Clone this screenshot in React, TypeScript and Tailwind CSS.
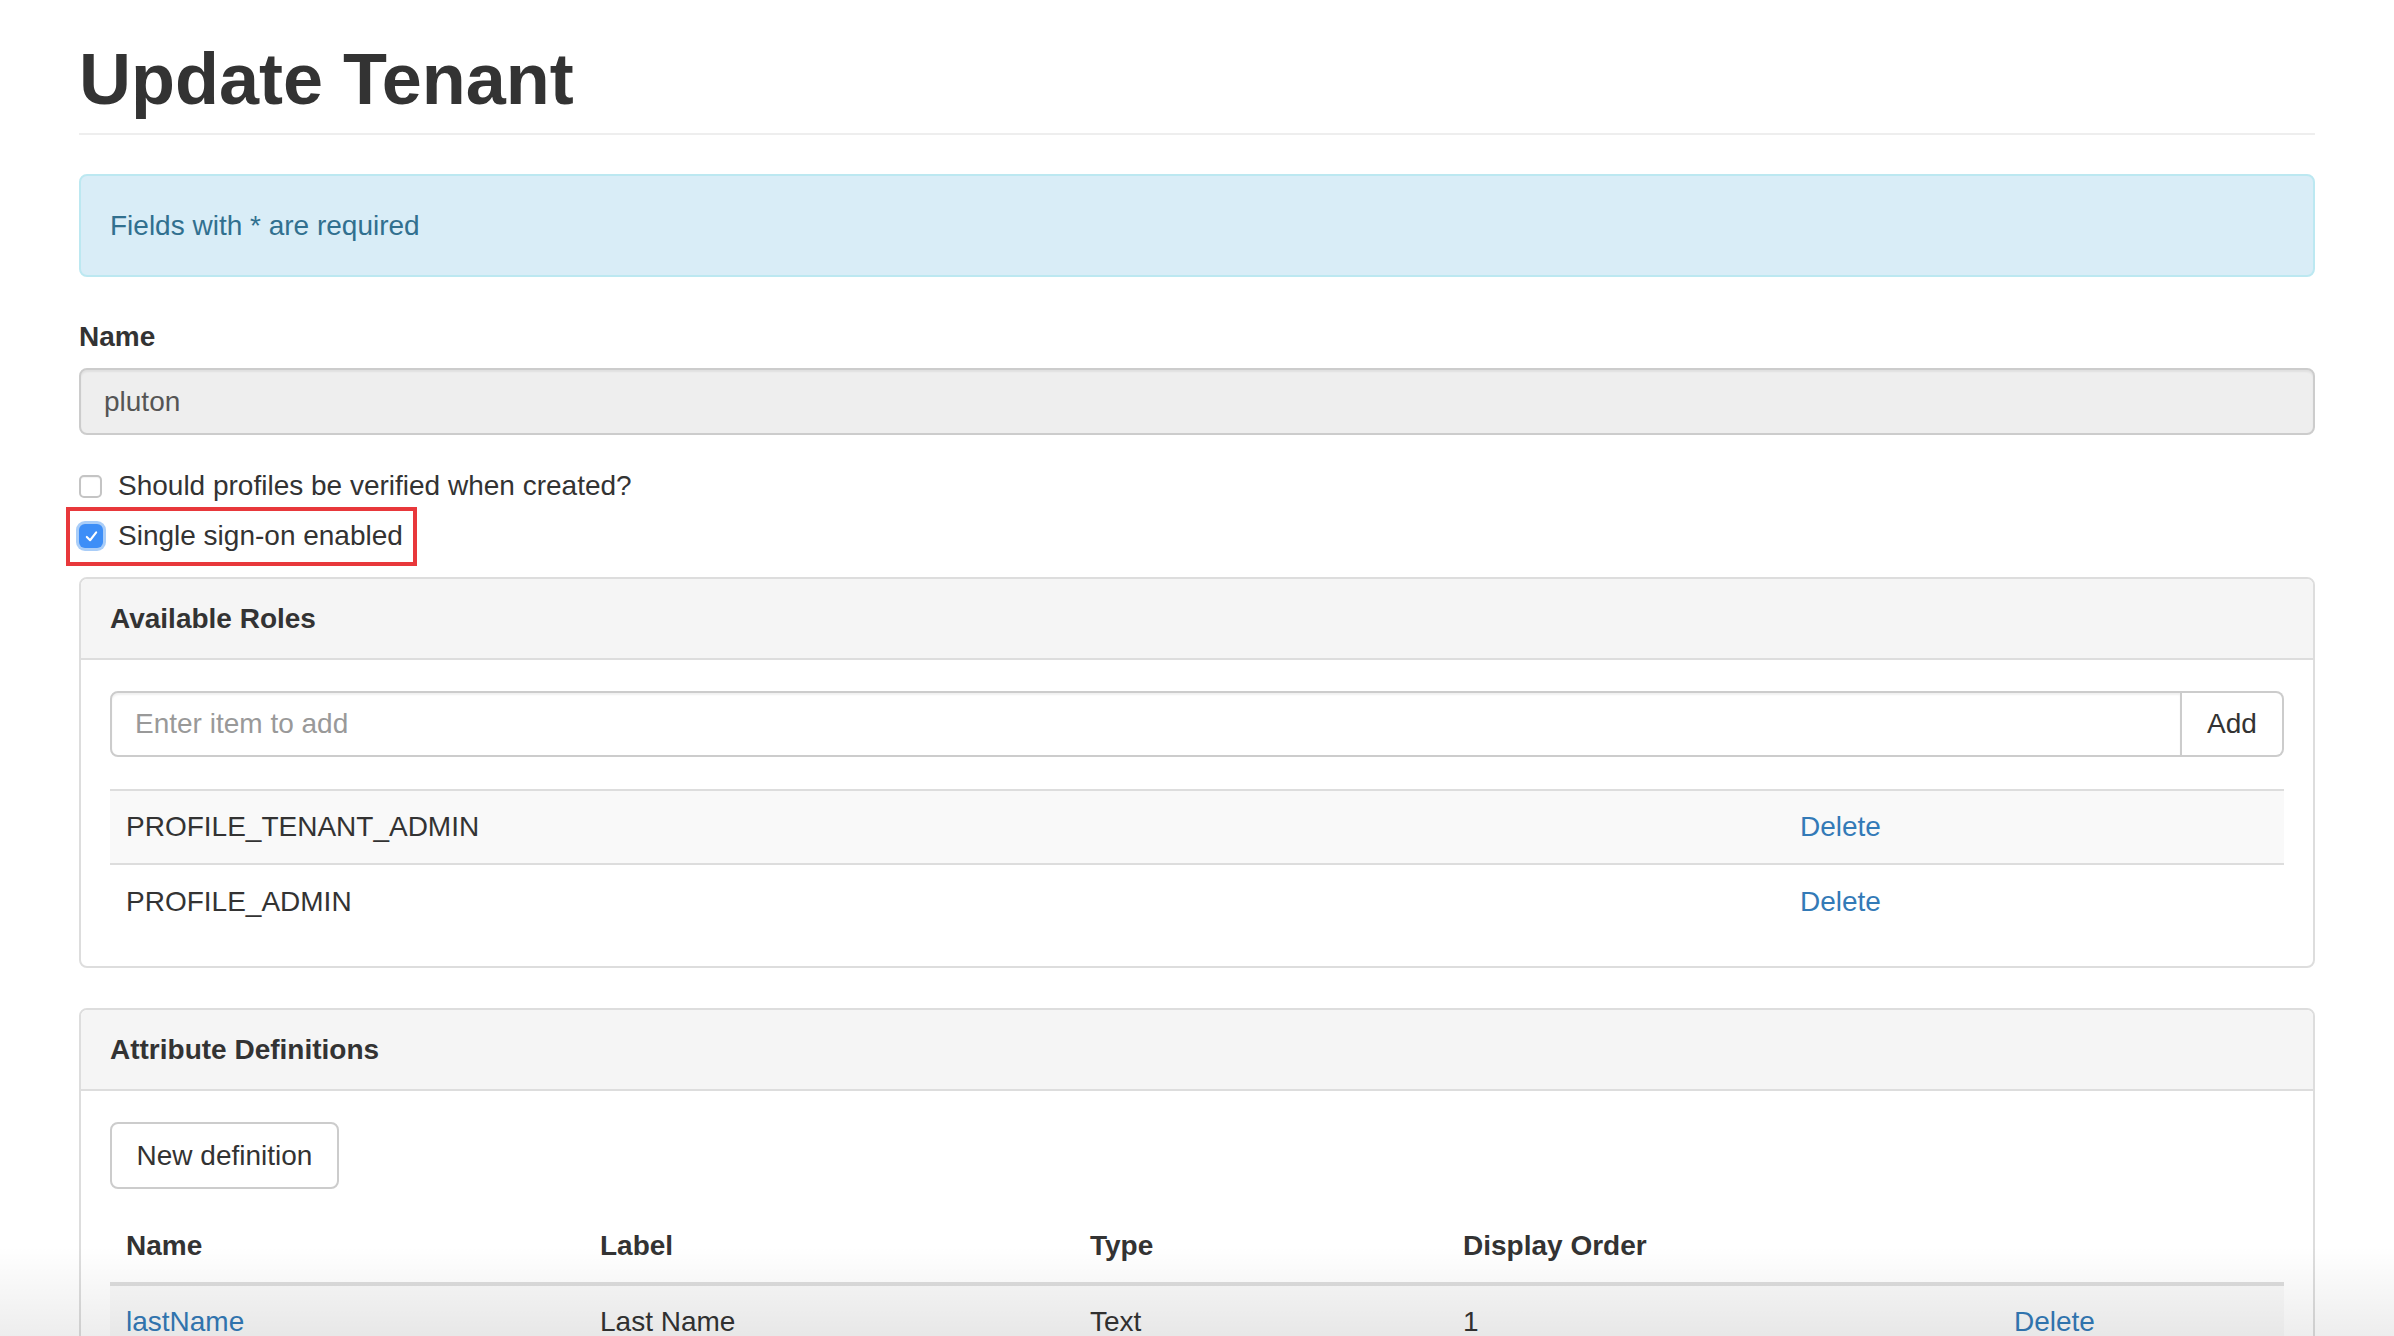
import React from 'react';

const roles = ['PROFILE_TENANT_ADMIN', 'PROFILE_ADMIN'];

const attrs = [{ name: 'lastName', label: 'Last Name', type: 'Text', order: '1' }];

const Check = ({ checked }: { checked?: boolean }) =>
  checked ? (
    <span className="flex h-[24px] w-[24px] items-center justify-center rounded-[6px] bg-[#3d8ef7] shadow-[0_0_0_3px_#a9cdf8]">
      <svg width="15" height="15" viewBox="0 0 16 16" fill="none">
        <path d="M3 8.5 L6.5 12 L13 3.5" stroke="white" strokeWidth="2.2" strokeLinecap="round" strokeLinejoin="round" />
      </svg>
    </span>
  ) : (
    <span className="block h-[23px] w-[23px] rounded-[5px] border-2 border-[#c4c4c4] bg-white shadow-[inset_0_1px_1px_rgba(0,0,0,0.05)]" />
  );

const Panel = ({ title, children }: any) => (
  <div className="rounded-[8px] border-2 border-[#ddd] bg-white">
    <div className="flex h-[81px] items-center rounded-t-[6px] border-b-2 border-[#ddd] bg-[#f5f5f5] px-[29px] font-bold">{title}</div>
    <div className="px-[29px] pt-[31px] pb-[28px]">{children}</div>
  </div>
);

export default function App() {
  return (
    <div className="relative h-[1336px] overflow-hidden bg-white px-[79px] font-['Liberation_Sans',Arial,sans-serif] text-[28px] leading-[40px] text-[#333]">
      <div className="border-b-2 border-[#eee] pt-[41px] pb-[15px]">
        <h1 className="text-[72px] font-bold leading-[77px]">Update Tenant</h1>
      </div>

      <div className="mt-[39px] flex h-[103px] items-center rounded-[8px] border-2 border-[#bce8f1] bg-[#d9edf7] px-[29px] text-[#31708f]">
        Fields with * are required
      </div>

      <div className="mt-[40px] font-bold">Name</div>
      <div className="mt-[11px] flex h-[67px] items-center rounded-[8px] border-2 border-[#ccc] bg-[#eee] px-[23px] text-[#555] shadow-[inset_0_2px_2px_rgba(0,0,0,0.06)]">
        pluton
      </div>

      <div className="mt-[31px] flex items-center gap-[16px]">
        <Check />
        <span>Should profiles be verified when created?</span>
      </div>
      <div className="relative mt-[10px] flex items-center gap-[15px]">
        <Check checked />
        <span>Single sign-on enabled</span>
        <div className="pointer-events-none absolute -left-[13px] -top-[9px] h-[59px] w-[351px] border-[4px] border-[#e8383b]" />
      </div>

      <div className="mt-[21px]">
        <Panel title="Available Roles">
          <div className="flex h-[66px]">
            <div className="flex flex-1 items-center rounded-l-[8px] border-2 border-[#ccc] px-[23px] text-[#999] shadow-[inset_0_2px_2px_rgba(0,0,0,0.06)]">
              Enter item to add
            </div>
            <div className="flex w-[102px] items-center justify-center rounded-r-[8px] border-2 border-l-0 border-[#ccc] bg-white">Add</div>
          </div>
          <table className="mt-[32px] w-full">
            <tbody>
              {roles.map((r, i) => (
                <tr key={r} className={i % 2 === 0 ? 'bg-[#f9f9f9]' : ''}>
                  <td className="h-[74px] w-[1674px] border-t-2 border-[#ddd] px-[16px]">{r}</td>
                  <td className="h-[74px] border-t-2 border-[#ddd] px-[16px] text-[#337ab7]">Delete</td>
                </tr>
              ))}
            </tbody>
          </table>
        </Panel>
      </div>

      <div className="mt-[40px]">
        <Panel title="Attribute Definitions">
          <div className="flex h-[67px] w-[229px] items-center justify-center rounded-[8px] border-2 border-[#ccc] bg-white">New definition</div>
          <table className="mt-[21px] w-full">
            <thead>
              <tr className="text-left font-bold">
                <th className="h-[74px] w-[474px] border-b-4 border-[#ddd] px-[16px]">Name</th>
                <th className="h-[74px] w-[490px] border-b-4 border-[#ddd] px-[16px]">Label</th>
                <th className="h-[74px] w-[373px] border-b-4 border-[#ddd] px-[16px]">Type</th>
                <th className="h-[74px] w-[551px] border-b-4 border-[#ddd] px-[16px]">Display Order</th>
                <th className="h-[74px] border-b-4 border-[#ddd] px-[16px]" />
              </tr>
            </thead>
            <tbody>
              {attrs.map((a) => (
                <tr key={a.name} className="bg-[#f9f9f9]">
                  <td className="h-[74px] px-[16px] text-[#337ab7]">{a.name}</td>
                  <td className="h-[74px] px-[16px]">{a.label}</td>
                  <td className="h-[74px] px-[16px]">{a.type}</td>
                  <td className="h-[74px] px-[16px]">{a.order}</td>
                  <td className="h-[74px] px-[16px] text-[#337ab7]">Delete</td>
                </tr>
              ))}
            </tbody>
          </table>
        </Panel>
      </div>

      <div className="pointer-events-none absolute inset-x-0 bottom-0 h-[90px] bg-linear-to-b from-transparent to-black/[0.07]" />
    </div>
  );
}
